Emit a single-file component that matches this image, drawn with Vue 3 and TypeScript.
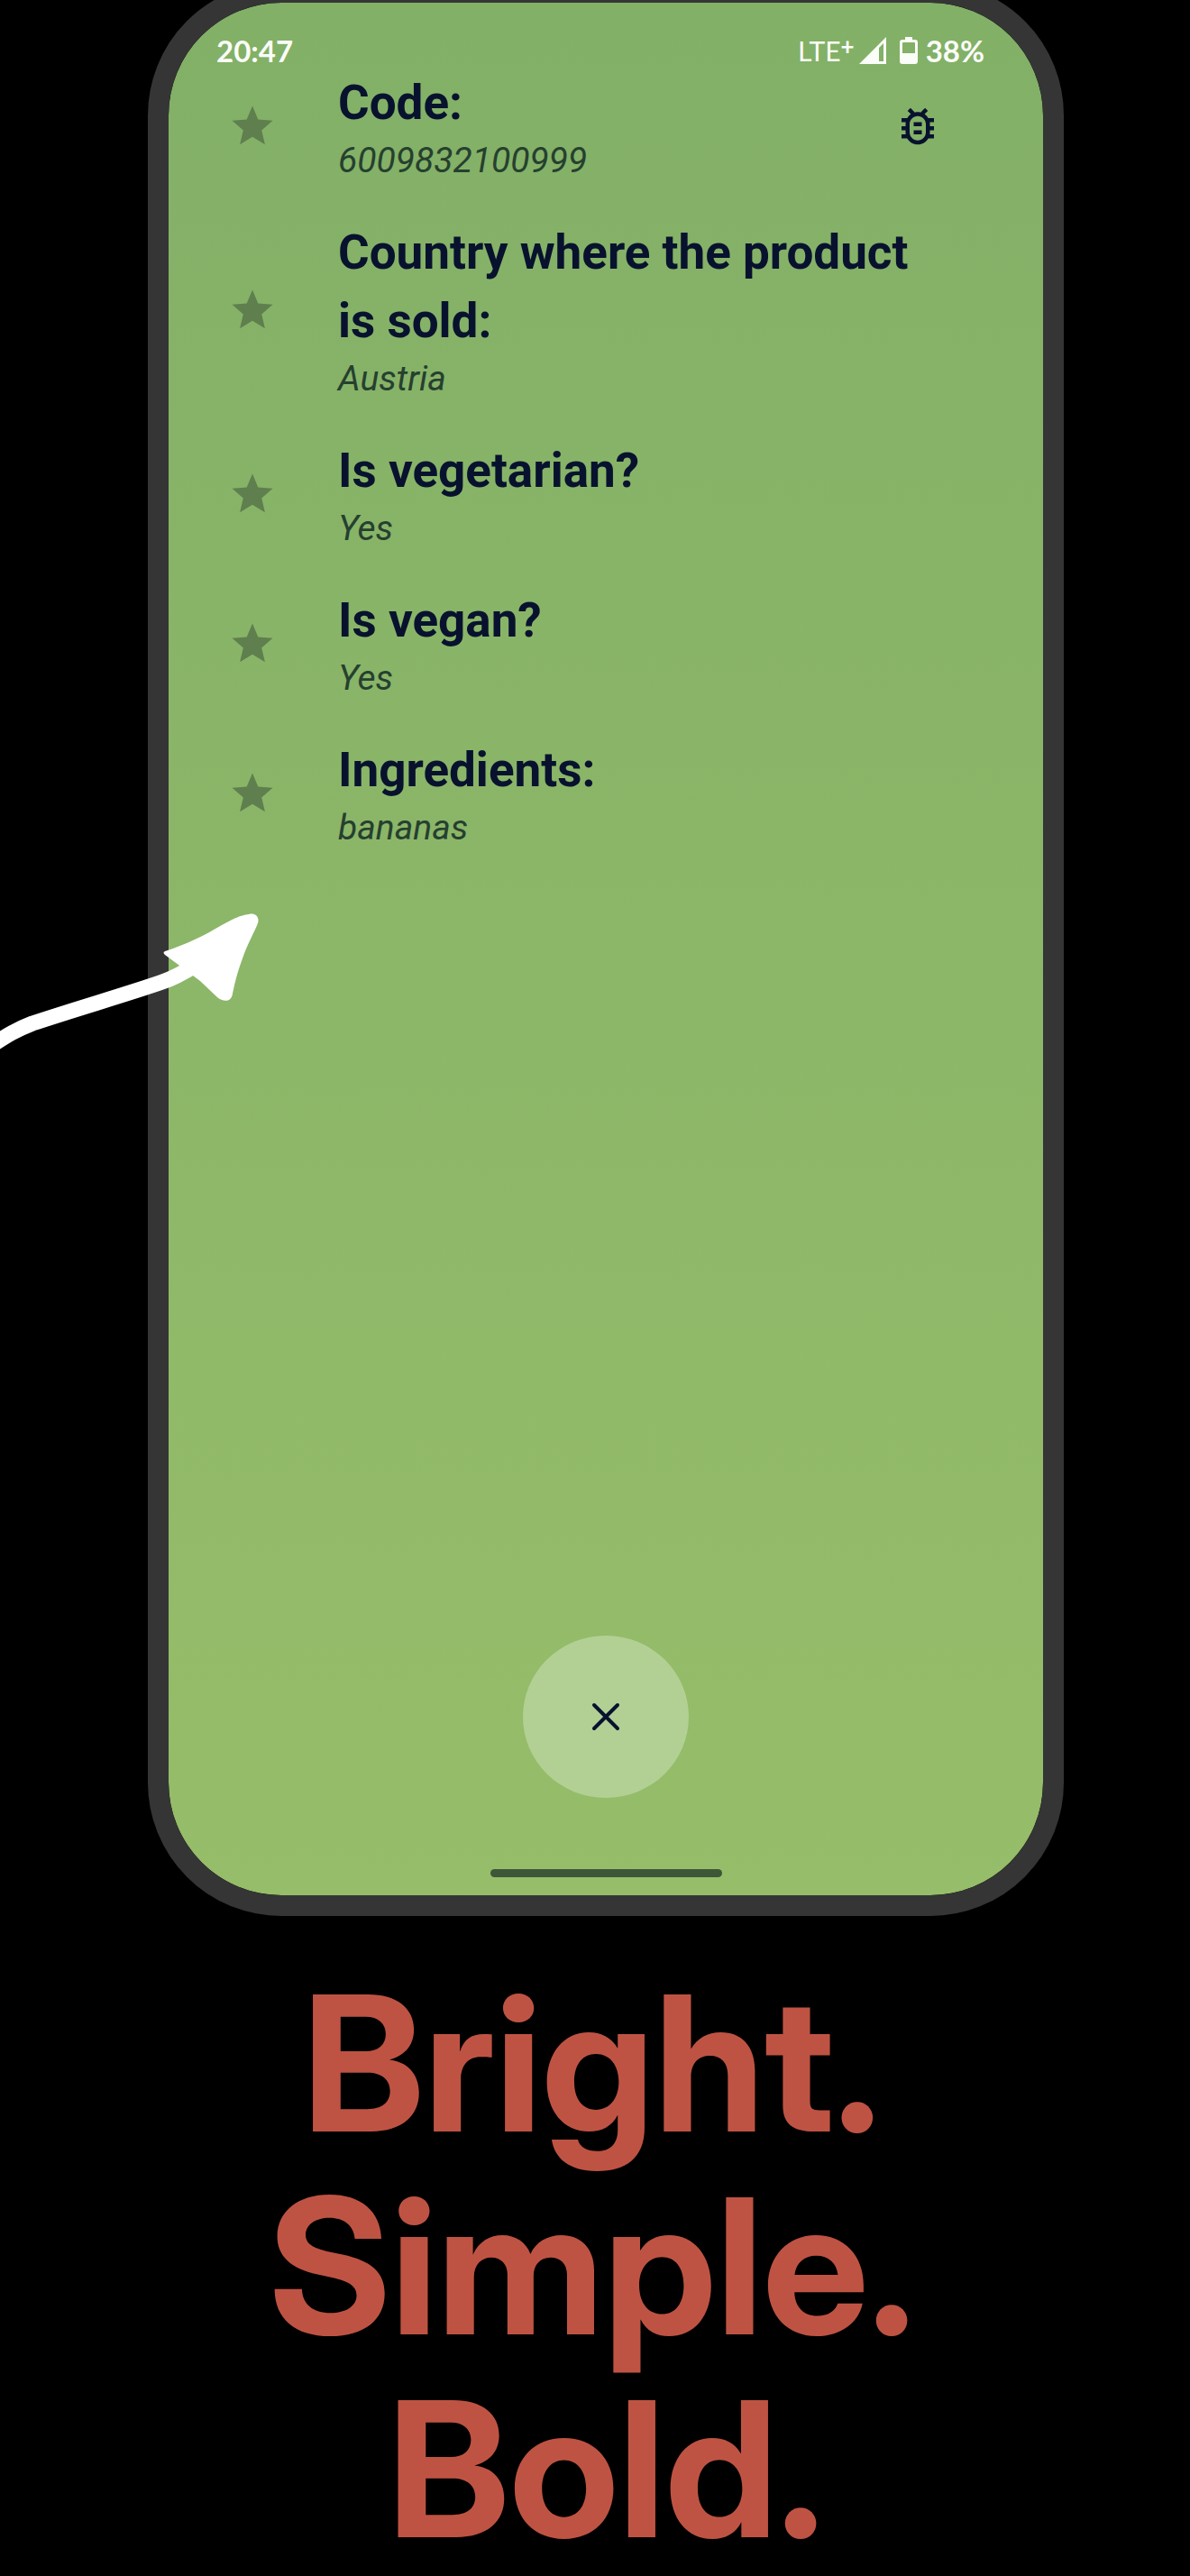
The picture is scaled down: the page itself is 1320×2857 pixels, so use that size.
<script setup lang="ts">
interface Fact {
  label: string
  value: string
}

const facts: Fact[] = [
  { label: 'Code:', value: '6009832100999' },
  { label: 'Country where the product is sold:', value: 'Austria' },
  { label: 'Is vegetarian?', value: 'Yes' },
  { label: 'Is vegan?', value: 'Yes' },
  { label: 'Ingredients:', value: 'bananas' },
]

const slogan: string[] = ['Bright.', 'Simple.', 'Bold.']
</script>

<template>
  <main class="page">
    <section class="phone">
      <header class="status">
        <span class="clock">20:47</span>
        <span class="network">LTE<span class="plus">+</span></span>
        <svg class="signal" viewBox="0 0 30 30" aria-hidden="true">
          <path d="M0 30L30 0V30Z M22 12V27H27V7Z" fill="#fbfdf8" fill-rule="evenodd" />
        </svg>
        <svg class="battery" viewBox="0 0 20 30" aria-hidden="true">
          <path
            d="M6 0H14V3H17Q20 3 20 6V27Q20 30 17 30H3Q0 30 0 27V6Q0 3 3 3H6Z M3 7V18H17V7Q17 6 16 6H4Q3 6 3 7Z"
            fill="#fbfdf8"
            fill-rule="evenodd"
          />
        </svg>
        <span class="percent">38%</span>
      </header>

      <ul class="facts">
        <li v-for="(fact, index) in facts" :key="fact.label" class="fact">
          <svg class="star" viewBox="0 0 24 24" aria-hidden="true">
            <path
              d="M12 17.27 18.18 21l-1.64-7.03L22 9.24l-7.19-.61L12 2 9.19 8.63 2 9.24l5.46 4.73L5.82 21z"
              fill="#5f7f4e"
            />
          </svg>
          <div class="body">
            <h2 class="label">{{ fact.label }}</h2>
            <p class="value">{{ fact.value }}</p>
          </div>
          <button v-if="index === 0" type="button" class="report" aria-label="Report a problem">
            <svg viewBox="0 0 24 24" aria-hidden="true">
              <path
                d="M20 8h-2.81c-.45-.78-1.07-1.45-1.82-1.96L17 4.41 15.59 3l-2.17 2.17C12.96 5.06 12.49 5 12 5s-.96.06-1.41.17L8.41 3 7 4.41l1.62 1.63C7.88 6.55 7.26 7.22 6.81 8H4v2h2.09c-.05.33-.09.66-.09 1v1H4v2h2v1c0 .34.04.67.09 1H4v2h2.81c1.04 1.79 2.97 3 5.19 3s4.15-1.21 5.19-3H20v-2h-2.09c.05-.33.09-.66.09-1v-1h2v-2h-2v-1c0-.34-.04-.67-.09-1H20V8zm-4 4v3c0 2.21-1.79 4-4 4s-4-1.79-4-4v-4c0-2.21 1.79-4 4-4s4 1.79 4 4v1zm-6 2h4v2h-4zm0-4h4v2h-4z"
                fill="#08122e"
              />
            </svg>
          </button>
        </li>
      </ul>

      <button type="button" class="close" aria-label="Close">
        <svg viewBox="0 0 32 32" aria-hidden="true">
          <path d="M3 3L29 29M29 3L3 29" fill="none" stroke="#08122e" stroke-width="4" stroke-linecap="round" />
        </svg>
      </button>
      <div class="home"></div>
    </section>

    <svg class="arrow" viewBox="0 0 320 220" aria-hidden="true">
      <path
        d="M-10 180C8 168 18 162 36 155C90 137 140 123 180 109C192 105 200 101 216 91"
        fill="none"
        stroke="#fff"
        stroke-width="17"
      />
      <path
        d="M183 75C205 68 228 57 246 46C257 40 266 35 276 34C284 32 288 38 286 44C282 54 274 68 269 83C262 102 260 113 258 122C257 131 248 132 241 126L222 108L206 96L183 79Q180 76 183 75Z"
        fill="#fff"
      />
    </svg>

    <h1 class="slogan">
      <span v-for="line in slogan" :key="line" class="line">{{ line }}</span>
    </h1>
  </main>
</template>

<style>
body {
  margin: 0;
  background: #000;
}
</style>

<style scoped>
.page {
  position: relative;
  display: flex;
  flex-direction: column;
  overflow: hidden;
  padding: 0 140px 6px 164px;
  background: #000;
  font-family: Roboto, 'Liberation Sans', sans-serif;
}

.phone {
  display: flex;
  flex-direction: column;
  align-items: center;
  margin-top: -20px;
  padding-bottom: 20px;
  border: 23px solid #353535;
  border-radius: 148px;
  background: linear-gradient(#82b067, #96bd69) padding-box;
}

.status {
  display: flex;
  align-items: center;
  align-self: stretch;
  height: 40px;
  padding: 33px 65px 0 53px;
  color: #fbfdf8;
  font-family: Lato, 'Open Sans', sans-serif;
  font-size: 33px;
  line-height: 40px;
}

.clock {
  margin-right: auto;
  font-weight: 700;
}

.network {
  display: flex;
  font-size: 30px;
}

.plus {
  font-size: 26px;
  font-weight: 700;
  line-height: 30px;
}

.signal {
  width: 30px;
  height: 30px;
  margin-left: 5px;
}

.battery {
  width: 20px;
  height: 30px;
  margin: 0 9px 0 15px;
}

.percent {
  font-weight: 700;
}

.facts {
  display: flex;
  flex-direction: column;
  gap: 38px;
  align-self: stretch;
  margin: 0;
  padding: 0 112px 0 66px;
  list-style: none;
}

.fact {
  display: flex;
  align-items: center;
}

.star {
  flex: none;
  width: 54px;
  height: 54px;
  margin-right: 68px;
}

.body {
  flex: 1;
}

.label {
  margin: 0;
  color: #08122e;
  font-size: 53px;
  font-weight: 700;
  line-height: 76px;
}

.value {
  margin: 0;
  color: #26402f;
  font-size: 39px;
  font-style: italic;
  line-height: 52px;
}

.report {
  display: flex;
  padding: 0;
  border: 0;
  background: none;
}

.report svg {
  width: 54px;
  height: 54px;
}

.close {
  display: flex;
  align-items: center;
  justify-content: center;
  width: 184px;
  height: 180px;
  margin-top: 870px;
  padding: 0;
  border: 0;
  border-radius: 50%;
  background: #b2d094;
}

.close svg {
  width: 32px;
  height: 32px;
}

.home {
  width: 257px;
  height: 9px;
  margin-top: 79px;
  border-radius: 5px;
  background: #3e5638;
}

.arrow {
  position: absolute;
  top: 980px;
  left: 0;
  width: 320px;
  height: 220px;
}

.slogan {
  display: flex;
  flex-direction: column;
  margin: 51px 0 0;
  color: #bf5343;
  font-family: 'Inter Display', Inter, 'Liberation Sans', sans-serif;
  font-size: 209px;
  font-weight: 700;
  line-height: 225px;
  text-align: center;
}

.line:not(:last-child) {
  padding-right: 32px;
}
</style>
